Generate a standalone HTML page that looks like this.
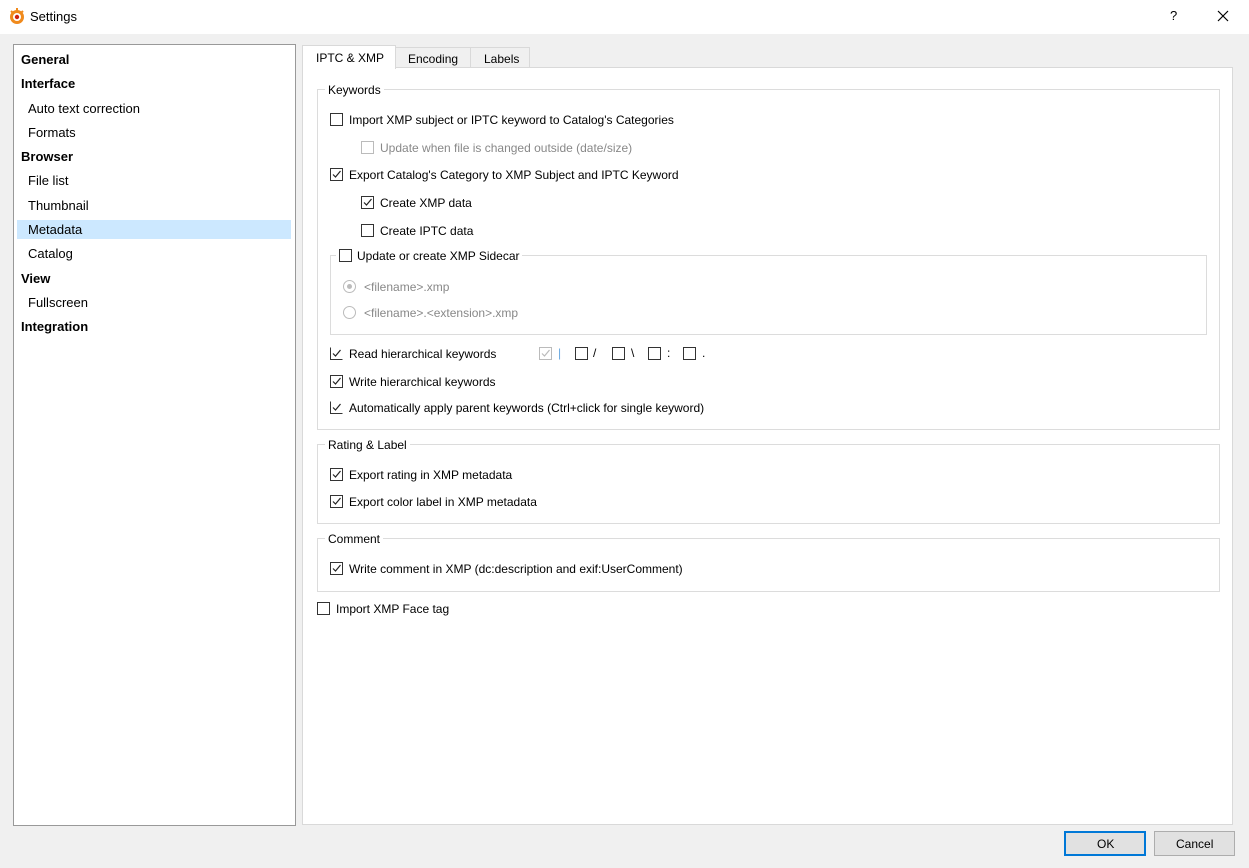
<!DOCTYPE html><html><head><style>
body{margin:0;width:1249px;height:868px;background:#f0f0f0;font-family:"Liberation Sans",sans-serif;font-size:12px;color:#000;position:relative;overflow:hidden}
.a{position:absolute;white-space:nowrap}
.cb{position:absolute;width:11px;height:11px;border:1px solid #333;background:#fff}
.cb.d{border-color:#bbb}
.cb svg{position:absolute;left:0;top:0}
.t{position:absolute;white-space:nowrap;line-height:14px}
.g{color:#888}
.fs{position:absolute;border:1px solid #dcdcdc}
.lg{position:absolute;background:#fff;padding:0 3px;line-height:14px}
.b{font-weight:bold;font-size:13px}
.r{position:absolute;width:11px;height:11px;border:1px solid #bbb;border-radius:50%;background:#fff}
</style></head><body>
<div class="a" style="left:0;top:0;width:1249px;height:34px;background:#fff"></div>
<svg class="a" style="left:8px;top:7px" width="18" height="18" viewBox="0 0 18 18"><circle cx="9" cy="10" r="7" fill="#f08a1c"/><circle cx="9" cy="10" r="4" fill="#fff"/><circle cx="9" cy="10" r="2.2" fill="#c21"/><path d="M3 4l2 2M9 1v3M15 4l-2 2" stroke="#f08a1c" stroke-width="2"/></svg>
<div class="t" style="left:30px;top:10px;font-size:13px">Settings</div>
<div class="t" style="left:1170px;top:9px;font-size:13px">?</div>
<svg class="a" style="left:1217px;top:10px" width="12" height="12"><path d="M1 1L11 11M11 1L1 11" stroke="#000" stroke-width="1.2"/></svg>

<div class="a" style="left:13px;top:44px;width:281px;height:780px;background:#fff;border:1px solid #999"></div>
<div class="t b" style="left:21px;top:53px">General</div>
<div class="t b" style="left:21px;top:77px">Interface</div>
<div class="t" style="left:28px;top:102px;font-size:13px">Auto text correction</div>
<div class="t" style="left:28px;top:126px;font-size:13px">Formats</div>
<div class="t b" style="left:21px;top:150px">Browser</div>
<div class="t" style="left:28px;top:174px;font-size:13px">File list</div>
<div class="t" style="left:28px;top:199px;font-size:13px">Thumbnail</div>
<div class="a" style="left:17px;top:220px;width:274px;height:19px;background:#cce8ff"></div>
<div class="t" style="left:28px;top:223px;font-size:13px">Metadata</div>
<div class="t" style="left:28px;top:247px;font-size:13px">Catalog</div>
<div class="t b" style="left:21px;top:272px">View</div>
<div class="t" style="left:28px;top:296px;font-size:13px">Fullscreen</div>
<div class="t b" style="left:21px;top:320px">Integration</div>

<div class="a" style="left:302px;top:67px;width:929px;height:756px;background:#fff;border:1px solid #d9d9d9"></div>
<div class="a" style="left:302px;top:45px;width:92px;height:23px;background:#fff;border:1px solid #d9d9d9;border-bottom:none"></div>
<div class="t" style="left:316px;top:51px">IPTC &amp; XMP</div>
<div class="a" style="left:395px;top:47px;width:74px;height:19px;background:#f0f0f0;border:1px solid #d9d9d9;border-bottom:none"></div>
<div class="t" style="left:408px;top:52px">Encoding</div>
<div class="a" style="left:470px;top:47px;width:58px;height:19px;background:#f0f0f0;border:1px solid #d9d9d9;border-bottom:none"></div>
<div class="t" style="left:484px;top:52px">Labels</div>

<div class="fs" style="left:317px;top:89px;width:901px;height:339px"></div>
<div class="lg" style="left:325px;top:83px">Keywords</div>
<div class="fs" style="left:330px;top:255px;width:875px;height:78px"></div>
<div class="fs" style="left:317px;top:444px;width:901px;height:78px"></div>
<div class="lg" style="left:325px;top:438px">Rating &amp; Label</div>
<div class="fs" style="left:317px;top:538px;width:901px;height:52px"></div>
<div class="lg" style="left:325px;top:532px">Comment</div>

<div class="cb" style="left:330px;top:113px"></div><div class="t" style="left:349px;top:113px">Import XMP subject or IPTC keyword to Catalog's Categories</div>
<div class="cb d" style="left:361px;top:141px"></div><div class="t g" style="left:380px;top:141px">Update when file is changed outside (date/size)</div>
<div class="cb" style="left:330px;top:168px"><svg width="11" height="11"><path d="M2 5.5L4.5 8L9.5 2" stroke="#222" fill="none" stroke-width="1.2"/></svg></div><div class="t" style="left:349px;top:168px">Export Catalog's Category to XMP Subject and IPTC Keyword</div>
<div class="cb" style="left:361px;top:196px"><svg width="11" height="11"><path d="M2 5.5L4.5 8L9.5 2" stroke="#222" fill="none" stroke-width="1.2"/></svg></div><div class="t" style="left:380px;top:196px">Create XMP data</div>
<div class="cb" style="left:361px;top:224px"></div><div class="t" style="left:380px;top:224px">Create IPTC data</div>
<div class="a" style="left:336px;top:248px;width:186px;height:14px;background:#fff"></div>
<div class="cb" style="left:339px;top:249px"></div><div class="t" style="left:357px;top:249px">Update or create XMP Sidecar</div>
<div class="r" style="left:343px;top:280px"><div style="position:absolute;left:3px;top:3px;width:5px;height:5px;border-radius:50%;background:#bbb"></div></div><div class="t g" style="left:364px;top:280px">&lt;filename&gt;.xmp</div>
<div class="r" style="left:343px;top:306px"></div><div class="t g" style="left:364px;top:306px">&lt;filename&gt;.&lt;extension&gt;.xmp</div>

<div class="cb" style="left:330px;top:347px;border-right-color:#fff;border-top-color:#fff"><svg width="11" height="11"><path d="M2 5.5L4.5 8L9.5 2" stroke="#222" fill="none" stroke-width="1.2"/></svg></div><div class="t" style="left:349px;top:347px">Read hierarchical keywords</div>
<div class="cb d" style="left:539px;top:347px"><svg width="11" height="11"><path d="M2 5.5L4.5 8L9.5 2" stroke="#bbb" fill="none" stroke-width="1.2"/></svg></div><div class="t" style="left:558px;top:346px;color:#6aa8e0">|</div>
<div class="cb" style="left:575px;top:347px"></div><div class="t" style="left:593px;top:346px">/</div>
<div class="cb" style="left:612px;top:347px"></div><div class="t" style="left:631px;top:346px">\</div>
<div class="cb" style="left:648px;top:347px"></div><div class="t" style="left:667px;top:346px">:</div>
<div class="cb" style="left:683px;top:347px"></div><div class="t" style="left:702px;top:346px">.</div>
<div class="cb" style="left:330px;top:375px"><svg width="11" height="11"><path d="M2 5.5L4.5 8L9.5 2" stroke="#222" fill="none" stroke-width="1.2"/></svg></div><div class="t" style="left:349px;top:375px">Write hierarchical keywords</div>
<div class="cb" style="left:330px;top:401px;border-right-color:#fff;border-top-color:#fff"><svg width="11" height="11"><path d="M2 5.5L4.5 8L9.5 2" stroke="#222" fill="none" stroke-width="1.2"/></svg></div><div class="t" style="left:349px;top:401px">Automatically apply parent keywords (Ctrl+click for single keyword)</div>

<div class="cb" style="left:330px;top:468px"><svg width="11" height="11"><path d="M2 5.5L4.5 8L9.5 2" stroke="#222" fill="none" stroke-width="1.2"/></svg></div><div class="t" style="left:349px;top:468px">Export rating in XMP metadata</div>
<div class="cb" style="left:330px;top:495px"><svg width="11" height="11"><path d="M2 5.5L4.5 8L9.5 2" stroke="#222" fill="none" stroke-width="1.2"/></svg></div><div class="t" style="left:349px;top:495px">Export color label in XMP metadata</div>
<div class="cb" style="left:330px;top:562px"><svg width="11" height="11"><path d="M2 5.5L4.5 8L9.5 2" stroke="#222" fill="none" stroke-width="1.2"/></svg></div><div class="t" style="left:349px;top:562px">Write comment in XMP (dc:description and exif:UserComment)</div>
<div class="cb" style="left:317px;top:602px"></div><div class="t" style="left:336px;top:602px">Import XMP Face tag</div>

<div class="a" style="left:1064px;top:831px;width:78px;height:21px;background:#e1e1e1;border:2px solid #0078d7"></div>
<div class="t" style="left:1097px;top:837px">OK</div>
<div class="a" style="left:1154px;top:831px;width:79px;height:23px;background:#e1e1e1;border:1px solid #adadad"></div>
<div class="t" style="left:1176px;top:837px">Cancel</div>
</body></html>
